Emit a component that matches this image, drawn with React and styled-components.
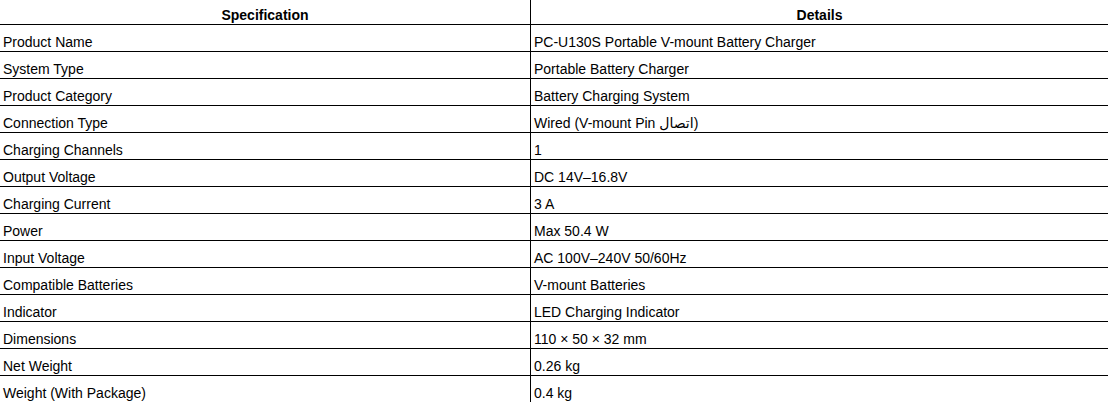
import React from 'react';
import styled, { createGlobalStyle } from 'styled-components';

const GlobalStyle = createGlobalStyle`
  html, body {
    margin: 0;
    padding: 0;
    background: #fff;
    overflow: hidden;
  }
  body {
    font-family: "Liberation Sans", Arial, "DejaVu Sans", sans-serif;
    color: #000;
  }
`;

const specs = [
  ['Product Name', 'PC-U130S Portable V-mount Battery Charger'],
  ['System Type', 'Portable Battery Charger'],
  ['Product Category', 'Battery Charging System'],
  ['Connection Type', 'Wired (V-mount Pin اتصال)'],
  ['Charging Channels', '1'],
  ['Output Voltage', 'DC 14V–16.8V'],
  ['Charging Current', '3 A'],
  ['Power', 'Max 50.4 W'],
  ['Input Voltage', 'AC 100V–240V 50/60Hz'],
  ['Compatible Batteries', 'V-mount Batteries'],
  ['Indicator', 'LED Charging Indicator'],
  ['Dimensions', '110 × 50 × 32 mm'],
  ['Net Weight', '0.26 kg'],
  ['Weight (With Package)', '0.4 kg'],
];

const Table = styled.div`
  display: grid;
  grid-template-columns: 531px 1fr;
  width: 1108px;
  font-size: 14px;
`;

const Cell = styled.div`
  box-sizing: border-box;
  height: ${(p) => (p.$head ? '25px' : '27px')};
  padding: ${(p) => (p.$head ? '7px 3px 0' : '9px 3px 0')};
  line-height: 16px;
  white-space: nowrap;
  border-bottom: 1px solid #000;
  border-right: ${(p) => (p.$first ? '1px solid #000' : 'none')};
  font-weight: ${(p) => (p.$head ? 700 : 400)};
  text-align: ${(p) => (p.$head ? 'center' : 'left')};
`;

export default function App() {
  return (
    <>
      <GlobalStyle />
      <Table>
        <Cell $head $first>Specification</Cell>
        <Cell $head>Details</Cell>
        {specs.map(([name, value]) => (
          <React.Fragment key={name}>
            <Cell $first>{name}</Cell>
            <Cell>{value}</Cell>
          </React.Fragment>
        ))}
      </Table>
    </>
  );
}
